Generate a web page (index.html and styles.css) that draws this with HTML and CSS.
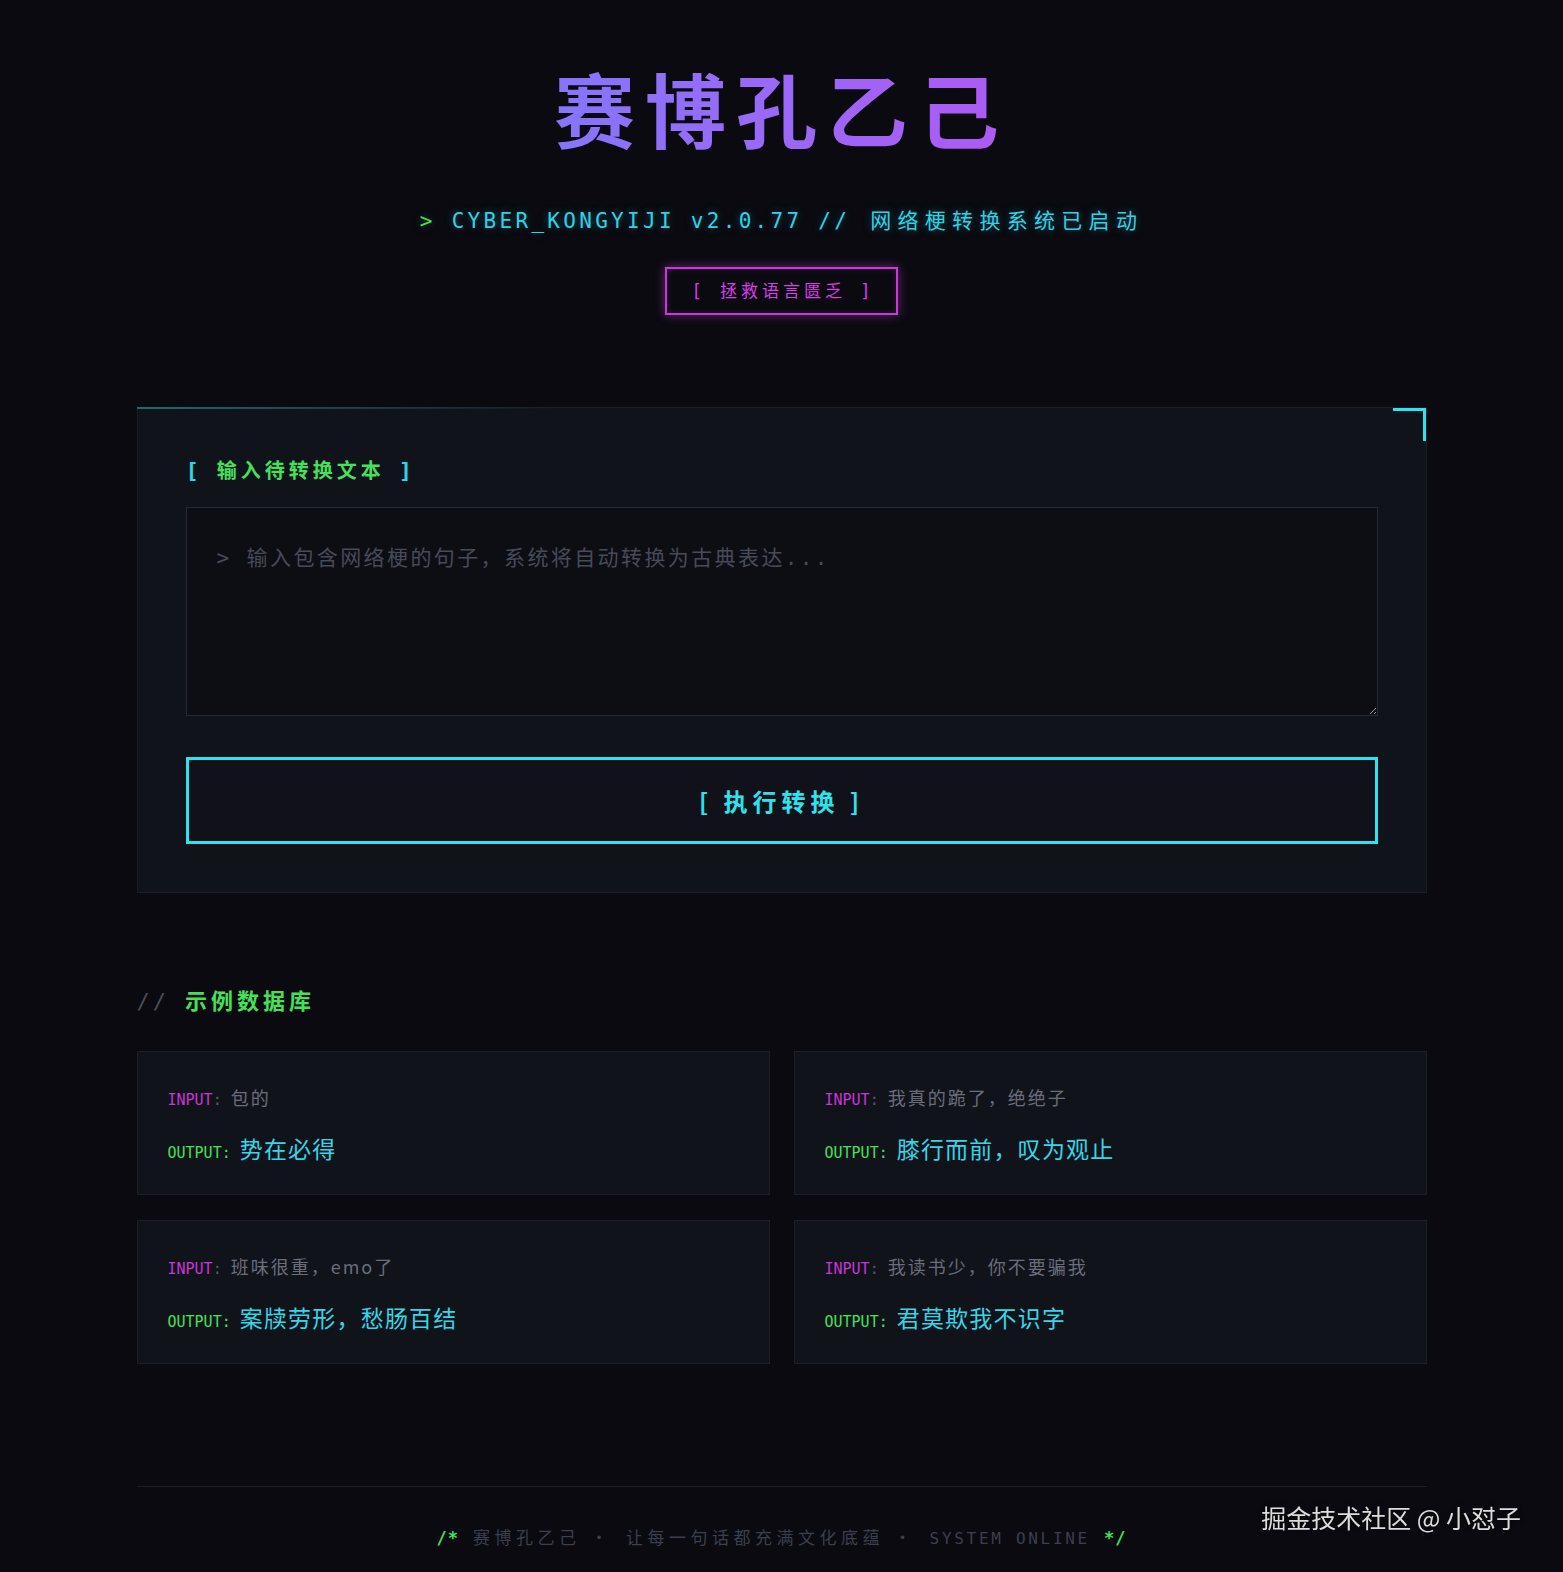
FILE: index.html
```html
<!DOCTYPE html>
<html lang="zh-CN">
<head>
    <meta charset="UTF-8">
    <meta name="viewport" content="width=device-width, initial-scale=1.0">
    <title>赛博孔乙己</title>
    <link rel="stylesheet" href="styles.css">
</head>
<body>
    <div class="page">
        <header class="hero">
            <h1 class="title">赛博孔乙己</h1>
            <p class="subtitle"><span class="prompt">&gt;</span> CYBER_KONGYIJI v2.0.77 // <span class="sub-cn">网络梗转换系统已启动</span></p>
            <div class="badge">[ 拯救语言匮乏 ]</div>
        </header>

        <section class="panel">
            <label class="field-label" for="source"><span class="bracket open">[</span>输入待转换文本<span class="bracket close">]</span></label>
            <textarea id="source" placeholder="> 输入包含网络梗的句子，系统将自动转换为古典表达..."></textarea>
            <button class="run-btn" type="button">[ 执行转换 ]</button>
        </section>

        <section class="examples">
            <h2 class="section-title"><span class="slashes">//</span>示例数据库</h2>
            <div class="example-grid">
                <div class="example-card">
                    <div class="ex-in"><span class="tag-in">INPUT</span><span class="colon">:</span>包的</div>
                    <div class="ex-out"><span class="tag-out">OUTPUT</span><span class="colon">:</span>势在必得</div>
                </div>
                <div class="example-card">
                    <div class="ex-in"><span class="tag-in">INPUT</span><span class="colon">:</span>我真的跪了，绝绝子</div>
                    <div class="ex-out"><span class="tag-out">OUTPUT</span><span class="colon">:</span>膝行而前，叹为观止</div>
                </div>
                <div class="example-card">
                    <div class="ex-in"><span class="tag-in">INPUT</span><span class="colon">:</span>班味很重，emo了</div>
                    <div class="ex-out"><span class="tag-out">OUTPUT</span><span class="colon">:</span>案牍劳形，愁肠百结</div>
                </div>
                <div class="example-card">
                    <div class="ex-in"><span class="tag-in">INPUT</span><span class="colon">:</span>我读书少，你不要骗我</div>
                    <div class="ex-out"><span class="tag-out">OUTPUT</span><span class="colon">:</span>君莫欺我不识字</div>
                </div>
            </div>
        </section>

        <footer class="footer">
            <p><span class="cmt">/*</span>赛博孔乙己<span class="dot">·</span>让每一句话都充满文化底蕴<span class="dot">·</span><span class="latin">SYSTEM ONLINE</span><span class="cmt">*/</span></p>
        </footer>
    </div>
    <div class="watermark">掘金技术社区 @ 小怼子</div>
</body>
</html>
```

FILE: styles.css
```css
body {
    margin: 0;
    padding: 0;
    background: #0a0a10;
    color: #c8c8d0;
    font-family: "DejaVu Sans Mono", "Noto Sans CJK SC", monospace;
}
.page {
    max-width: 1290px;
    margin: 0 auto;
}
.hero {
    text-align: center;
    padding-top: 59px;
}
.title {
    margin: 0;
    font-family: "Noto Sans CJK SC", sans-serif;
    font-size: 81px;
    font-weight: 700;
    line-height: 96px;
    letter-spacing: 10px;
    background: linear-gradient(90deg, #5f8cff 0%, #8f70f8 40%, #b058f3 70%, #d848ef 100%);
    -webkit-background-clip: text;
    background-clip: text;
    color: transparent;
}
.subtitle {
    margin: 49px 0 0;
    font-size: 21px;
    line-height: 30px;
    letter-spacing: 3.3px;
    color: #2fd3e3;
    text-shadow: 0 0 8px rgba(34, 211, 238, 0.35);
}
.subtitle .prompt {
    color: #4ade4a;
}
.sub-cn {
    font-family: "Noto Sans CJK SC", sans-serif;
    letter-spacing: 6.3px;
    margin-left: 4px;
}
.badge {
    display: inline-block;
    margin-top: 31px;
    padding: 10px 22px 10px 25px;
    border: 2px solid #c73ad8;
    box-shadow: 0 0 10px rgba(217, 70, 239, 0.45), inset 0 0 6px rgba(217, 70, 239, 0.2);
    color: #d83fe6;
    font-size: 17px;
    line-height: 24px;
    letter-spacing: 4px;
}
.panel {
    position: relative;
    margin-top: 92px;
    padding: 48px;
    background: #11131b;
    border: 1px solid #1b1d27;
}
.panel::before {
    content: "";
    position: absolute;
    left: -1px;
    top: -1px;
    width: 420px;
    height: 2px;
    background: linear-gradient(90deg, #1f6a72, rgba(31, 106, 114, 0));
}
.panel::after {
    content: "";
    position: absolute;
    right: 0;
    top: 0;
    width: 30px;
    height: 30px;
    border-top: 3px solid #2ee2ee;
    border-right: 3px solid #2ee2ee;
}
.field-label {
    display: block;
    font-family: "Noto Sans CJK SC", sans-serif;
    font-size: 20px;
    font-weight: 700;
    line-height: 28px;
    letter-spacing: 4px;
    color: #46e05a;
}
.field-label .bracket {
    font-family: "DejaVu Sans Mono", monospace;
    color: #2fd3e3;
    font-size: 22px;
}
.field-label .open {
    margin-right: 14px;
}
.field-label .close {
    margin-left: 14px;
}
textarea {
    display: block;
    box-sizing: border-box;
    width: 100%;
    height: 209px;
    margin-top: 22px;
    padding: 34px 30px;
    background: #0d0d14;
    border: 1px solid #262833;
    color: #c8c8d0;
    font-family: "DejaVu Sans Mono", "Noto Sans CJK SC", monospace;
    font-size: 21px;
    line-height: 1.6;
    letter-spacing: 2.4px;
    outline: none;
}
textarea::placeholder {
    color: #474a58;
}
.run-btn {
    display: block;
    box-sizing: border-box;
    width: 100%;
    height: 87px;
    margin-top: 41px;
    background: #101119;
    border: 3px solid #2ee2ee;
    color: #2ee2ee;
    font-family: "Noto Sans CJK SC", sans-serif;
    font-size: 24px;
    font-weight: 700;
    letter-spacing: 5px;
    cursor: pointer;
}
.examples {
    margin-top: 91px;
}
.section-title {
    height: 30px;
    margin: 0;
    font-family: "Noto Sans CJK SC", sans-serif;
    font-size: 22px;
    font-weight: 700;
    line-height: 30px;
    letter-spacing: 4px;
    color: #46e05a;
}
.section-title .slashes {
    font-family: "DejaVu Sans Mono", monospace;
    font-weight: 400;
    line-height: 1;
    color: #4a4c58;
    letter-spacing: 3px;
    margin-right: 16px;
}
.example-grid {
    display: grid;
    grid-template-columns: 1fr 1fr;
    gap: 25px 24px;
    margin-top: 37px;
}
.example-card {
    padding: 32px 30px 31px;
    background: #11131b;
    border: 1px solid #1c1e28;
}
.ex-in {
    height: 26px;
    font-family: "Noto Sans CJK SC", sans-serif;
    font-size: 18px;
    line-height: 26px;
    letter-spacing: 2px;
    color: #6a6d7a;
}
.ex-out {
    height: 30px;
    margin-top: 23px;
    font-family: "Noto Sans CJK SC", sans-serif;
    font-size: 23px;
    line-height: 30px;
    letter-spacing: 1.2px;
    color: #36d6e6;
}
.tag-in, .tag-out, .colon {
    font-family: "DejaVu Sans Mono", monospace;
    font-size: 15px;
    line-height: 1;
    letter-spacing: 0;
}
.colon {
    margin-right: 9px;
    color: #555866;
}
.tag-in {
    color: #c737d6;
}
.tag-out {
    color: #46e05a;
}
.ex-out .colon {
    color: #46e05a;
}
.footer {
    margin-top: 122px;
    border-top: 1px solid #1c1e28;
    text-align: center;
}
.footer p {
    margin: 0;
    padding: 37px 0 25px;
    font-family: "Noto Sans CJK SC", sans-serif;
    font-size: 17px;
    line-height: 26px;
    letter-spacing: 4.5px;
    color: #3c3f4e;
}
.footer .dot {
    margin: 0 14px 0 10px;
}
.footer .latin {
    font-family: "DejaVu Sans Mono", monospace;
    font-size: 16px;
    letter-spacing: 2.7px;
}
.footer .cmt {
    font-family: "DejaVu Sans Mono", monospace;
    font-weight: 700;
    color: #46e05a;
    letter-spacing: 1px;
    margin: 0 14px;
}
.watermark {
    position: fixed;
    right: 42px;
    bottom: 40px;
    font-family: "Noto Sans CJK SC", sans-serif;
    font-size: 25px;
    line-height: 30px;
    color: #dcdcdc;
    text-shadow: 0 0 4px rgba(0, 0, 0, 0.6);
}
```
